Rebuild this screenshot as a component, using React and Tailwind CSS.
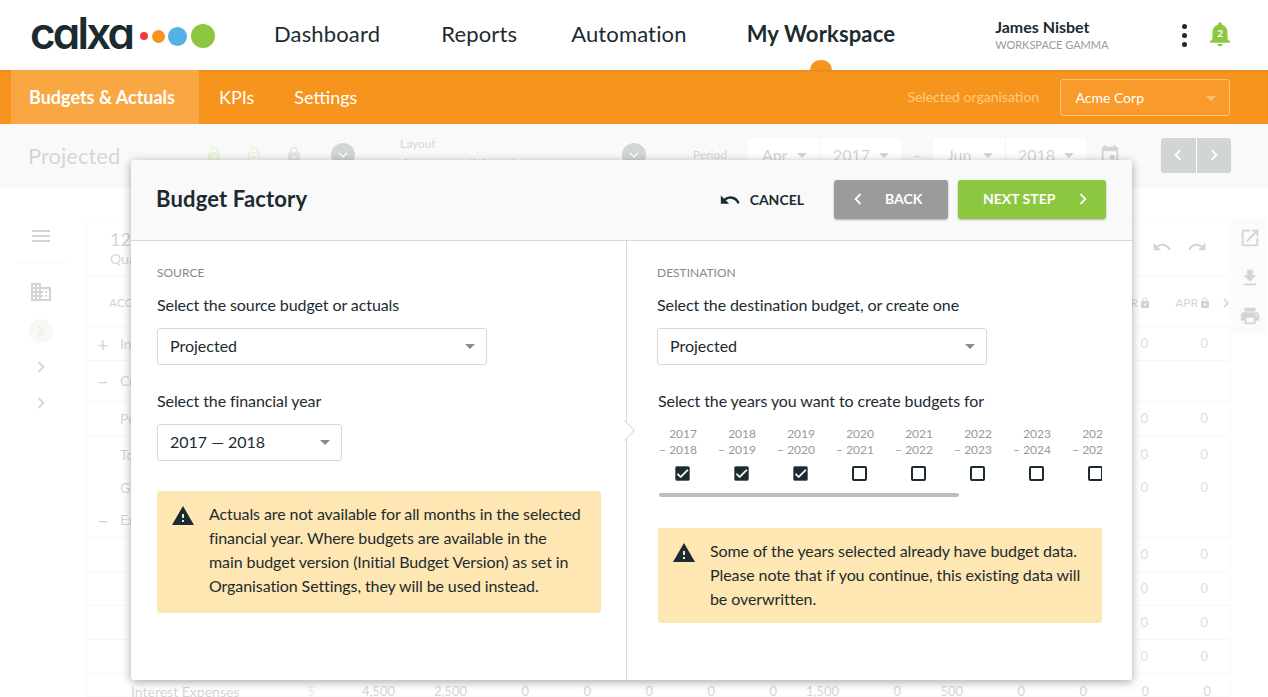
import {
  MdBusiness,
  MdCheck,
  MdChevronLeft,
  MdChevronRight,
  MdEvent,
  MdExpandMore,
  MdFileDownload,
  MdLock,
  MdLockOutline,
  MdMenu,
  MdNotifications,
  MdOpenInNew,
  MdPrint,
  MdRedo,
  MdUndo,
  MdWarning,
} from "react-icons/md";

const years = [
  ["2017", "2018", true],
  ["2018", "2019", true],
  ["2019", "2020", true],
  ["2020", "2021", false],
  ["2021", "2022", false],
  ["2022", "2023", false],
  ["2023", "2024", false],
  ["2024", "2025", false],
];

const bottomValues = ["0", "0", "0", "0", "0", "1,500", "0", "500", "0", "0", "0", "0"];

function Caret({ className }) {
  return (
    <span
      className={`h-0 w-0 border-x-[5px] border-t-[5px] border-x-transparent ${className}`}
    />
  );
}

function Select({ label, width }) {
  return (
    <div
      className={`flex h-[37px] items-center justify-between rounded-[3px] border border-[#d9d9d9] bg-white pb-[2px] pl-[12px] pr-[11px] text-base text-[#1c2b30] ${width}`}
    >
      {label}
      <Caret className="mt-[2px] border-t-[#8a8a8a]" />
    </div>
  );
}

function Warning({ className, children }) {
  return (
    <div className={`flex rounded-[3px] bg-[#ffe7b3] pl-[14px] pt-[11px] text-base leading-6 tracking-[-0.09px] text-[#1c2b30] ${className}`}>
      <MdWarning className="mr-[14px] mt-[2px] shrink-0 text-[24px] text-[#1c2b30]" />
      <p>{children}</p>
    </div>
  );
}

function YearColumn({ from, to, checked }) {
  return (
    <div className="w-[59px] shrink-0">
      <div className="w-[39px] whitespace-nowrap text-right text-xs leading-4 text-[#999]">
        {from}
        <br />– {to}
      </div>
      <div
        className={`ml-[17px] mt-[8px] flex h-[15px] w-[15px] items-center justify-center rounded-[2px] border-2 border-[#1c2b30] ${checked ? "bg-[#1c2b30]" : "bg-white"}`}
      >
        {checked && <MdCheck className="shrink-0 text-[15px] text-white" stroke="currentColor" strokeWidth={1} />}
      </div>
    </div>
  );
}

function Header() {
  return (
    <header className="relative flex h-[70px] shrink-0 items-center bg-white text-[#1c2b30]">
      <div className="ml-[30px] flex w-[186px] items-center">
        <span className="mt-[-4px] font-['Inter',sans-serif] text-[44px] font-semibold leading-none tracking-[-2.8px] [font-feature-settings:'cv11']">
          calxa
        </span>
        <span className="ml-[8px] mt-[2px] h-2 w-2 rounded-full bg-[#ee3a3f]" />
        <span className="ml-[4px] mt-[2px] h-[13px] w-[13px] rounded-full bg-[#f7941e]" />
        <span className="ml-[3px] mt-[2px] h-[19px] w-[19px] rounded-full bg-[#55b0e6]" />
        <span className="ml-[4px] mt-[2px] h-6 w-6 rounded-full bg-[#8dc63f]" />
      </div>
      <nav className="mb-[4px] ml-[58px] flex text-[22px] tracking-[0.15px]">
        <a>Dashboard</a>
        <a className="ml-[61px]">Reports</a>
        <a className="ml-[54px]">Automation</a>
        <a className="ml-[60px] font-bold">My Workspace</a>
      </nav>
      <div className="ml-[100px] w-[170px]">
        <div className="text-base font-bold leading-5">James Nisbet</div>
        <div className="text-[11px] leading-4 text-[#9a9a9a]">WORKSPACE GAMMA</div>
      </div>
      <div className="ml-[17px] flex flex-col gap-[4px]">
        <span className="h-[5px] w-[5px] rounded-full bg-[#1c2b30]" />
        <span className="h-[5px] w-[5px] rounded-full bg-[#1c2b30]" />
        <span className="h-[5px] w-[5px] rounded-full bg-[#1c2b30]" />
      </div>
      <div className="relative ml-[18px] mt-[-2px] flex items-center justify-center">
        <MdNotifications className="text-[30px] text-[#8dc63f]" />
        <span className="absolute top-[7px] text-[10px] font-bold text-white">2</span>
      </div>
      <span className="absolute bottom-0 left-[810px] h-[10px] w-[22px] rounded-t-full bg-[#f7941e]" />
    </header>
  );
}

function OrangeBar() {
  return (
    <div className="flex h-[54px] shrink-0 items-center bg-[#f7941e] pl-[11px] shadow-[inset_0_2px_2px_rgba(0,0,0,0.06)]">
      <div className="flex h-full w-[188px] items-center bg-[#f9a743] pl-[18px] text-lg font-bold text-white">
        Budgets &amp; Actuals
      </div>
      <div className="ml-[20px] text-lg text-white">KPIs</div>
      <div className="ml-[40px] text-lg text-white">Settings</div>
      <div className="ml-[550px] w-[153px] text-sm text-[#ffcc80]">Selected organisation</div>
      <div className="flex h-[37px] w-[170px] items-center justify-between rounded-[3px] border border-[#fcc26f] bg-[#f89b2c] pl-[14px] pr-[13px] pt-[2px] text-sm text-white">
        Acme Corp
        <Caret className="border-t-[#fcc26f]" />
      </div>
    </div>
  );
}

function Toolbar() {
  return (
    <div className="flex h-[64px] shrink-0 items-center bg-[#e2e2e2] pb-[2px] pl-[28px] text-[#1c2b30]">
      <div className="w-[177px] text-[22px]">Projected</div>
      <MdLock className="text-[18px] text-[#8dc63f]" />
      <MdLockOutline className="ml-[22px] text-[18px] text-[#8dc63f]" />
      <MdLock className="ml-[22px] text-[18px] text-[#777]" />
      <span className="ml-[28px] flex h-6 w-6 items-center justify-center rounded-full bg-[#1c2b30] text-white">
        <MdExpandMore className="text-lg" />
      </span>
      <div className="ml-[23px] h-full w-[22px] border-l border-[#cfcfcf]" />
      <div className="w-[222px] pt-[2px]">
        <div className="text-xs">Layout</div>
        <div className="text-base">Accounts/Month</div>
      </div>
      <span className="flex h-6 w-6 items-center justify-center rounded-full bg-[#1c2b30] text-white">
        <MdExpandMore className="text-lg" />
      </span>
      <div className="ml-[18px] h-full w-[29px] border-l border-[#cfcfcf]" />
      <div className="w-[55px] text-xs">Period</div>
      <div className="flex h-[35px] w-[153px] rounded-[3px] bg-white text-base">
        <div className="flex w-[72px] items-center justify-between border-r border-[#ccc] pl-[14px] pr-[12px]">
          Apr <Caret className="border-t-[#1c2b30]" />
        </div>
        <div className="flex flex-1 items-center justify-between pl-[13px] pr-[12px]">
          2017 <Caret className="border-t-[#1c2b30]" />
        </div>
      </div>
      <div className="w-[32px] text-center">–</div>
      <div className="flex h-[35px] w-[153px] rounded-[3px] bg-white text-base">
        <div className="flex w-[73px] items-center justify-between border-r border-[#ccc] pl-[14px] pr-[12px]">
          Jun <Caret className="border-t-[#1c2b30]" />
        </div>
        <div className="flex flex-1 items-center justify-between pl-[12px] pr-[12px]">
          2018 <Caret className="border-t-[#1c2b30]" />
        </div>
      </div>
      <MdEvent className="ml-[13px] text-[22px]" />
      <div className="ml-[40px] flex h-[35px] w-[70px] overflow-hidden rounded-[3px] bg-[#1c2b30] text-white">
        <div className="flex flex-1 items-center justify-center border-r border-white">
          <MdChevronLeft className="text-[22px]" />
        </div>
        <div className="flex flex-1 items-center justify-center">
          <MdChevronRight className="text-[22px]" />
        </div>
      </div>
    </div>
  );
}

function Row({ height, mark, label, values, borderless }) {
  return (
    <div className={`flex shrink-0 items-center text-[#1c2b30] ${borderless ? "" : "border-b border-[#d8d8d8]"} ${height}`}>
      <span className="w-[26px] pl-[10px] text-xl leading-none">{mark}</span>
      <span className="ml-[7px] w-[300px] text-sm">{label}</span>
      {values && (
        <div className="ml-auto flex w-[142px] pr-[21px] text-[13px] text-[#555]">
          <span className="w-[60px] text-right">0</span>
          <span className="w-[60px] text-right">0</span>
        </div>
      )}
    </div>
  );
}

function Workspace() {
  return (
    <div className="flex min-h-0 flex-1 bg-white pt-[30px]">
      <aside className="flex w-[82px] shrink-0 flex-col items-center text-[#1c2b30]">
        <MdMenu className="mt-[6px] text-[24px]" />
        <div className="mt-[14px] h-px w-[50px] bg-[#ddd]" />
        <MdBusiness className="mt-[17px] text-[24px]" />
        <span className="mt-[15px] flex h-6 w-6 items-center justify-center rounded-full bg-[#ddd] text-[#f7941e]">
          <MdChevronRight className="text-[22px]" />
        </span>
        <MdChevronRight className="mt-[13px] text-[22px]" />
        <MdChevronRight className="mt-[14px] text-[22px]" />
      </aside>
      <div className="ml-[4px] w-[1145px] shrink-0 rounded-t-[3px] border border-[#e5e5e5] bg-white">
        <div className="flex h-[58px] items-start border-b border-[#d8d8d8] pl-[23px] pt-[10px] text-[#1c2b30]">
          <div>
            <div className="text-lg leading-5">120 Days</div>
            <div className="text-sm leading-5">Quarter</div>
          </div>
          <div className="ml-auto mr-[23px] mt-[8px] flex gap-[15px] text-xl">
            <MdUndo />
            <MdRedo />
          </div>
        </div>
        <div className="flex h-[50px] items-center border-b border-[#d8d8d8] pl-[22px] pt-[3px] text-xs text-[#1c2b30]">
          ACCOUNT
          <div className="ml-auto mr-[-5px] flex items-center">
            <span>MAR</span>
            <MdLock className="ml-[1px]" />
            <span className="ml-[24px]">APR</span>
            <MdLock className="ml-[1px]" />
            <MdChevronRight className="ml-[6px] text-lg" />
          </div>
        </div>
        <Row height="h-[34px]" mark="+" label="Income" values />
        <Row height="h-[41px]" mark="−" label="Cost of Sales" />
        <Row height="h-[34px]" label="Purchases" values />
        <Row height="h-[37px]" label="Total" values borderless />
        <Row height="h-[30px]" label="Gross Profit" values borderless />
        <Row height="h-[35px]" mark="−" label="Expenses" />
        <Row height="h-[34px]" values />
        <Row height="h-[34px]" values />
        <Row height="h-[34px]" values />
        <Row height="h-[34px]" values />
        <div className="flex h-[34px] items-center pt-[2px] text-[13px] text-[#1c2b30]">
          <span className="ml-[44px] w-[176px] text-sm">Interest Expenses</span>
          <span className="w-[30px] text-[#55b0e6]">$</span>
          <span className="w-[58px] text-right">4,500</span>
          <span className="w-[72px] text-right">2,500</span>
          {bottomValues.map((value, index) => (
            <span key={index} className="w-[62px] text-right">
              {value}
            </span>
          ))}
        </div>
      </div>
      <div className="ml-[1px] w-[35px] shrink-0 text-[#1c2b30]">
        <div className="flex h-[39px] items-center justify-center bg-[#ececec]">
          <MdOpenInNew className="text-[22px]" />
        </div>
        <div className="mt-px flex h-[39px] items-center justify-center bg-[#ececec]">
          <MdFileDownload className="text-[22px]" />
        </div>
        <div className="mt-px flex h-[35px] items-center justify-center bg-[#ececec]">
          <MdPrint className="text-[22px]" />
        </div>
      </div>
    </div>
  );
}

function BudgetFactory() {
  return (
    <div className="absolute left-[131px] top-[160px] flex h-[520px] w-[1001px] flex-col rounded-[3px] bg-white text-[#1c2b30] shadow-[0_2px_10px_rgba(0,0,0,0.35)]">
      <div className="flex h-[81px] shrink-0 items-center rounded-t-[3px] border-b border-[#d9d9d9] bg-[#f9f9f9] pb-[2px] pl-[25px] pr-[26px]">
        <h1 className="mb-[2px] text-[22px] font-bold tracking-[0.15px]">Budget Factory</h1>
        <div className="ml-auto mt-[2px] flex items-center text-sm font-bold">
          <MdUndo className="text-[22px]" />
          <span className="ml-[9px]">CANCEL</span>
        </div>
        <button className="ml-[30px] flex h-[39px] w-[114px] items-center rounded-[3px] bg-[#9b9b9b] pl-[13px] text-sm font-bold text-white shadow-[0_1px_2px_rgba(0,0,0,0.3)]">
          <MdChevronLeft className="text-[22px]" />
          <span className="ml-[16px]">BACK</span>
        </button>
        <button className="ml-[10px] flex h-[39px] w-[148px] items-center rounded-[3px] bg-[#8dc63f] pl-[25px] text-sm font-bold text-white shadow-[0_1px_2px_rgba(0,0,0,0.3)]">
          <span>NEXT STEP</span>
          <MdChevronRight className="ml-[17px] text-[22px]" />
        </button>
      </div>
      <div className="flex min-h-0 flex-1">
        <section className="relative w-[496px] shrink-0 border-r border-[#d9d9d9] pl-[26px] pr-[25px] pt-[24px]">
          <div className="text-xs leading-4 text-[#888]">SOURCE</div>
          <div className="mt-[12px] text-base leading-6 tracking-[-0.09px]">Select the source budget or actuals</div>
          <Select label="Projected" width="mt-[11px] w-[330px]" />
          <div className="mt-[24px] text-base leading-6 tracking-[-0.09px]">Select the financial year</div>
          <Select label="2017 — 2018" width="mt-[11px] w-[185px]" />
          <Warning className="mt-[30px] h-[122px] w-[444px] pr-[18px]">
            Actuals are not available for all months in the selected financial year. Where budgets are
            available in the main budget version (Initial Budget Version) as set in Organisation
            Settings, they will be used instead.
          </Warning>
          <span className="absolute right-[-6px] top-[182px] h-[15px] w-[15px] rotate-45 border-r border-t border-[#d9d9d9] bg-white" />
        </section>
        <section className="min-w-0 flex-1 pl-[30px] pr-[30px] pt-[24px]">
          <div className="text-xs leading-4 text-[#888]">DESTINATION</div>
          <div className="mt-[12px] text-base leading-6 tracking-[-0.09px]">Select the destination budget, or create one</div>
          <Select label="Projected" width="mt-[11px] w-[330px]" />
          <div className="mt-[24px] pl-px text-base leading-6 tracking-[-0.09px]">Select the years you want to create budgets for</div>
          <div className="ml-px mt-[13px] w-[444px] overflow-hidden">
            <div className="flex">
              {years.map(([from, to, checked]) => (
                <YearColumn key={from} from={from} to={to} checked={checked} />
              ))}
            </div>
            <div className="ml-px mt-[12px] h-1 w-[300px] rounded-full bg-[#bdbdbd]" />
          </div>
          <Warning className="ml-px mt-[31px] h-[95px] w-[444px] pr-[12px]">
            Some of the years selected already have budget data. Please note that if you continue, this
            existing data will be overwritten.
          </Warning>
        </section>
      </div>
    </div>
  );
}

export default function App() {
  return (
    <div className="relative flex h-[697px] flex-col overflow-hidden bg-white font-['Lato',sans-serif]">
      <Header />
      <OrangeBar />
      <Toolbar />
      <Workspace />
      <div className="absolute inset-x-0 bottom-0 top-[124px] bg-white/80" />
      <BudgetFactory />
    </div>
  );
}
